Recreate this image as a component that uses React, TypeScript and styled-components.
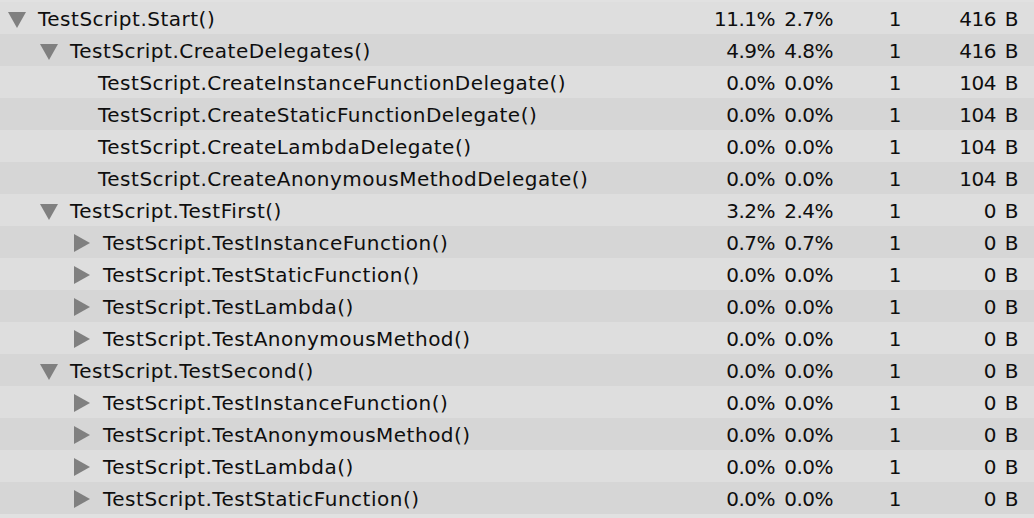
import React from "react";
import styled, { createGlobalStyle } from "styled-components";

const Global = createGlobalStyle`
  html, body { margin: 0; padding: 0; background: #e1e1e1; }
  body { font-family: "DejaVu Sans", "Noto Sans", sans-serif; }
`;

type Kind = "open" | "closed" | "leaf";
interface Row {
  name: string;
  depth: number;
  kind: Kind;
  total: string;
  self: string;
  calls: string;
  gc: string;
}

const rows: Row[] = [
  { name: "TestScript.Start()", depth: 0, kind: "open", total: "11.1%", self: "2.7%", calls: "1", gc: "416 B" },
  { name: "TestScript.CreateDelegates()", depth: 1, kind: "open", total: "4.9%", self: "4.8%", calls: "1", gc: "416 B" },
  { name: "TestScript.CreateInstanceFunctionDelegate()", depth: 2, kind: "leaf", total: "0.0%", self: "0.0%", calls: "1", gc: "104 B" },
  { name: "TestScript.CreateStaticFunctionDelegate()", depth: 2, kind: "leaf", total: "0.0%", self: "0.0%", calls: "1", gc: "104 B" },
  { name: "TestScript.CreateLambdaDelegate()", depth: 2, kind: "leaf", total: "0.0%", self: "0.0%", calls: "1", gc: "104 B" },
  { name: "TestScript.CreateAnonymousMethodDelegate()", depth: 2, kind: "leaf", total: "0.0%", self: "0.0%", calls: "1", gc: "104 B" },
  { name: "TestScript.TestFirst()", depth: 1, kind: "open", total: "3.2%", self: "2.4%", calls: "1", gc: "0 B" },
  { name: "TestScript.TestInstanceFunction()", depth: 2, kind: "closed", total: "0.7%", self: "0.7%", calls: "1", gc: "0 B" },
  { name: "TestScript.TestStaticFunction()", depth: 2, kind: "closed", total: "0.0%", self: "0.0%", calls: "1", gc: "0 B" },
  { name: "TestScript.TestLambda()", depth: 2, kind: "closed", total: "0.0%", self: "0.0%", calls: "1", gc: "0 B" },
  { name: "TestScript.TestAnonymousMethod()", depth: 2, kind: "closed", total: "0.0%", self: "0.0%", calls: "1", gc: "0 B" },
  { name: "TestScript.TestSecond()", depth: 1, kind: "open", total: "0.0%", self: "0.0%", calls: "1", gc: "0 B" },
  { name: "TestScript.TestInstanceFunction()", depth: 2, kind: "closed", total: "0.0%", self: "0.0%", calls: "1", gc: "0 B" },
  { name: "TestScript.TestAnonymousMethod()", depth: 2, kind: "closed", total: "0.0%", self: "0.0%", calls: "1", gc: "0 B" },
  { name: "TestScript.TestLambda()", depth: 2, kind: "closed", total: "0.0%", self: "0.0%", calls: "1", gc: "0 B" },
  { name: "TestScript.TestStaticFunction()", depth: 2, kind: "closed", total: "0.0%", self: "0.0%", calls: "1", gc: "0 B" },
];

const Table = styled.div`
  padding-top: 2px;
  display: flex;
  flex-direction: column;
`;

const RowBox = styled.div<{ $odd: boolean }>`
  display: grid;
  grid-template-columns: 1fr 80px 58px 68px 117px;
  height: 32px;
  padding-right: 16px;
  background: ${(p) => (p.$odd ? "#d6d6d6" : "#dedede")};
  color: #0e0e0e;
  font-size: 20px;
  line-height: 32px;
  white-space: nowrap;
`;

const NameCell = styled.div<{ $indent: number }>`
  display: flex;
  align-items: flex-start;
  padding-left: ${(p) => p.$indent}px;
  overflow: hidden;
`;

const Toggle = styled.span<{ $shift: number }>`
  display: flex;
  align-items: center;
  justify-content: center;
  width: 18px;
  height: 32px;
  margin-right: 12px;
  padding-top: ${(p) => p.$shift}px;
  box-sizing: border-box;
  flex: none;
`;

const Label = styled.span`
  padding-top: 1px;
  letter-spacing: 0.5px;
`;

const Num = styled.div`
  text-align: right;
  padding-top: 1px;
  letter-spacing: -0.5px;
  word-spacing: 3px;
`;

const ARROW = "#808080";

function Arrow({ kind }: { kind: Kind }) {
  if (kind === "open") {
    return (
      <Toggle $shift={4}>
        <svg width="18" height="16" viewBox="0 0 18 16">
          <polygon points="0,0 18,0 9,16" fill={ARROW} />
        </svg>
      </Toggle>
    );
  }
  return (
    <Toggle $shift={2}>
      <svg width="16" height="18" viewBox="0 0 16 18">
        <polygon points="0,0 16,9 0,18" fill={ARROW} />
      </svg>
    </Toggle>
  );
}

export default function App() {
  return (
    <>
      <Global />
      <Table>
        {rows.map((r, i) => {
          const indent = r.kind === "leaf" ? 98 : [8, 40, 73][r.depth];
          return (
            <RowBox key={i} $odd={i % 2 === 1}>
              <NameCell $indent={indent}>
                {r.kind !== "leaf" && <Arrow kind={r.kind} />}
                <Label>{r.name}</Label>
              </NameCell>
              <Num>{r.total}</Num>
              <Num>{r.self}</Num>
              <Num>{r.calls}</Num>
              <Num>{r.gc}</Num>
            </RowBox>
          );
        })}
      </Table>
    </>
  );
}
